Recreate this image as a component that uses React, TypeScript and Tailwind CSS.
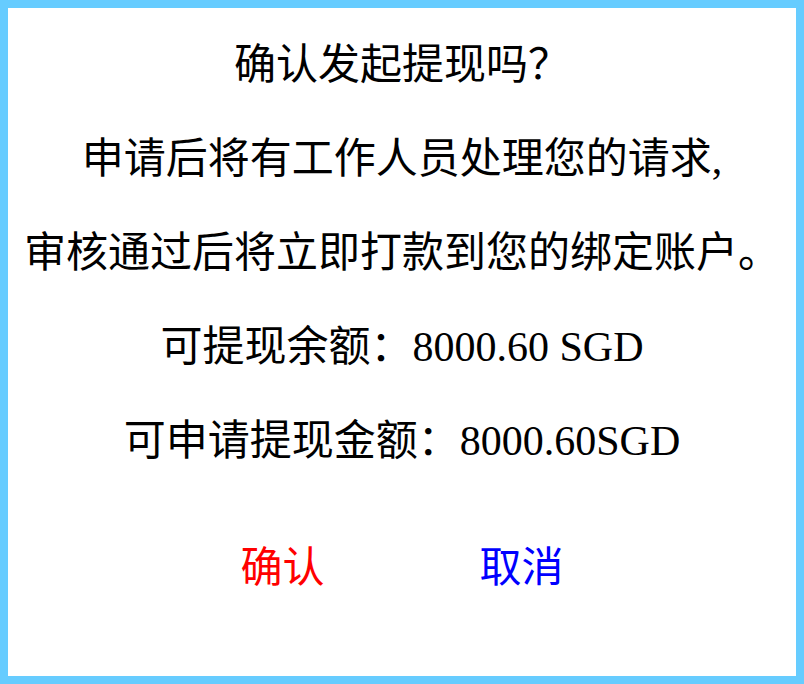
export default function App() {
  const lines = [
    "确认发起提现吗？",
    "申请后将有工作人员处理您的请求,",
    "审核通过后将立即打款到您的绑定账户。",
    "可提现余额：8000.60 SGD",
    "可申请提现金额：8000.60SGD",
  ];

  return (
    <div
      className="flex h-[684px] w-[804px] flex-col items-center border-8 border-[#66ccff] bg-white pt-[10px] text-[42px] text-black"
      style={{ fontFamily: '"Liberation Serif", "Noto Sans CJK SC", serif' }}
    >
      {lines.map((line) => (
        <p key={line} className="whitespace-nowrap leading-[94px]">
          {line}
        </p>
      ))}
      <div className="mt-[33px] flex gap-[155px] leading-[94px]">
        <button className="text-[#ff0000]">确认</button>
        <button className="text-[#0000ff]">取消</button>
      </div>
    </div>
  );
}
